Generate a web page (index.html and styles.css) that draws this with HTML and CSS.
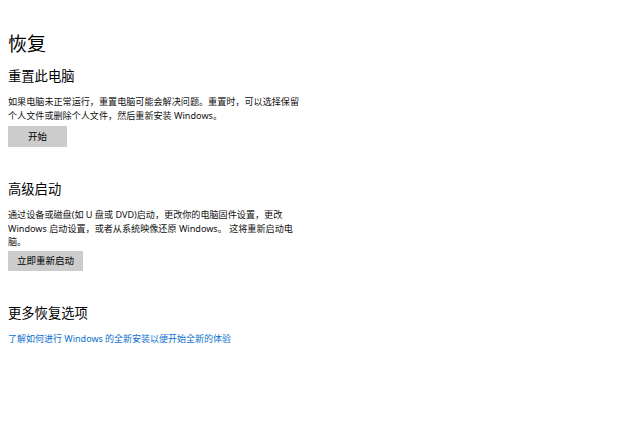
FILE: index.html
```html
<!DOCTYPE html>
<html lang="zh-CN">
<head>
<meta charset="utf-8">
<title>恢复</title>
<link rel="stylesheet" href="styles.css">
</head>
<body>
<main class="page">
  <h1 class="title">恢复</h1>

  <section class="sec sec-first">
    <h2 class="sec-title">重置此电脑</h2>
    <p class="desc">如果电脑未正常运行，重置电脑可能会解决问题。重置时，可以选择保留<br>个人文件或删除个人文件，然后重新安装 Windows。</p>
    <button class="btn btn-first" type="button">开始</button>
  </section>

  <section class="sec">
    <h2 class="sec-title">高级启动</h2>
    <p class="desc">通过设备或磁盘(如 U 盘或 DVD)启动，更改你的电脑固件设置，更改<br>Windows 启动设置，或者从系统映像还原 Windows。 这将重新启动电<br>脑。</p>
    <button class="btn" type="button">立即重新启动</button>
  </section>

  <section class="sec">
    <h2 class="sec-title">更多恢复选项</h2>
    <a class="link" href="#">了解如何进行 Windows 的全新安装以便开始全新的体验</a>
  </section>
</main>
</body>
</html>
```

FILE: styles.css
```css
html, body {
  margin: 0;
  padding: 0;
  background: #ffffff;
}

body {
  font-family: "Noto Sans", "Noto Sans CJK SC", sans-serif;
  color: #000000;
}

.page {
  padding: 32px 0 0 8px;
  display: flex;
  flex-direction: column;
  align-items: flex-start;
}

.title {
  margin: 0;
  font-size: 19px;
  line-height: 24px;
  font-weight: 400;
}

.sec {
  display: flex;
  flex-direction: column;
  align-items: flex-start;
  margin-top: 33px;
}

.sec-first {
  margin-top: 11px;
}

.sec-title {
  margin: 0;
  font-size: 13.3px;
  line-height: 18px;
  font-weight: 400;
}

.desc {
  margin: 10px 0 0 0;
  font-size: 9.1px;
  line-height: 13.5px;
  white-space: nowrap;
  color: #111111;
}

.btn {
  margin-top: 2px;
  min-width: 59px;
  height: 20px;
  padding: 0 9px;
  border: none;
  background: #cccccc;
  color: #000000;
  font-family: "Noto Sans", "Noto Sans CJK SC", sans-serif;
  font-size: 9.5px;
  line-height: 20px;
}

.btn-first {
  margin-top: 4px;
  height: 21px;
}

.link {
  margin-top: 10.5px;
  font-size: 9px;
  line-height: 13.5px;
  color: #0a6fd0;
  text-decoration: none;
}
```
